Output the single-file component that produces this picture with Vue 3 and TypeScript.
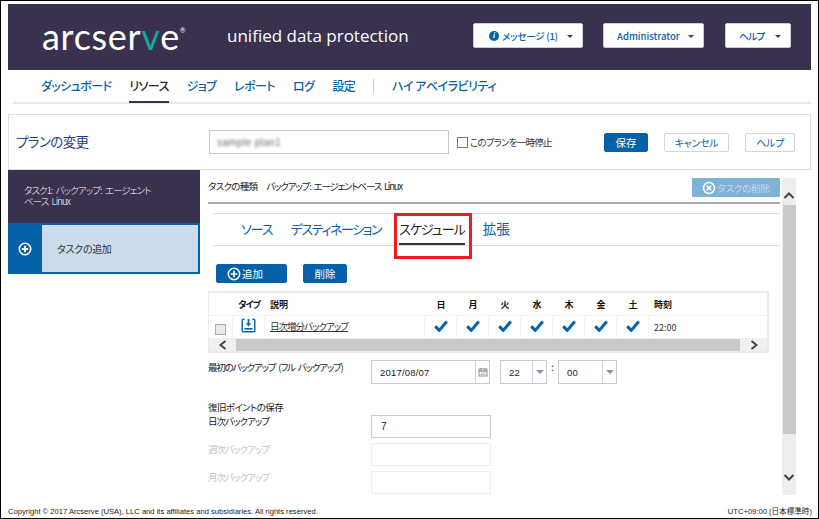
<script setup lang="ts">
const navItems = ['ダッシュボード', 'リソース', 'ジョブ', 'レポート', 'ログ', '設定']
const days = ['日', '月', '火', '水', '木', '金', '土']
</script>

<template>
  <div class="frame">
    <header class="brand">
      <div class="logo">arcser<span class="v">v</span>e<sup>®</sup></div>
      <div class="product">unified data protection</div>
      <div class="menus">
        <button class="menu m1"><span class="info">i</span>メッセージ (1)<span class="caret"></span></button>
        <button class="menu m2">Administrator<span class="caret"></span></button>
        <button class="menu m3">ヘルプ<span class="caret"></span></button>
      </div>
    </header>

    <nav class="nav">
      <a v-for="(n, i) in navItems" :key="n" :class="{ on: i === 1 }">{{ n }}</a>
      <span class="sep"></span>
      <a class="ha">ハイ アベイラビリティ</a>
    </nav>

    <section class="plan">
      <h1>プランの変更</h1>
      <div class="plan-input"><span class="blur">sample plan1</span></div>
      <label class="pause"><span class="cb"></span>このプランを一時停止</label>
      <button class="btn save">保存</button>
      <button class="btn ghost cancel">キャンセル</button>
      <button class="btn ghost help">ヘルプ</button>
    </section>

    <div class="work">
      <aside class="side">
        <div class="task">タスク1: バックアップ: エージェント<br />ベース Linux</div>
        <div class="add">
          <div class="add-icon">
            <svg width="14" height="14" viewBox="0 0 14 14"><circle cx="7" cy="7" r="5.7" fill="none" stroke="#fff" stroke-width="1.6" /><path d="M7 3.8v6.4M3.8 7h6.4" stroke="#fff" stroke-width="1.8" /></svg>
          </div>
          <div class="add-label">タスクの追加</div>
        </div>
      </aside>

      <div class="pane">
        <div class="pane-body">
          <div class="kind">
            <span class="kind-text"><span>タスクの種類</span><span class="kind-val">バックアップ: エージェントベース Linux</span></span>
            <button class="del">
              <svg width="14" height="14" viewBox="0 0 14 14"><circle cx="7" cy="7" r="5.5" fill="none" stroke="#fff" stroke-width="1.5" /><path d="M4.8 4.8l4.4 4.4M9.2 4.8l-4.4 4.4" stroke="#fff" stroke-width="1.7" /></svg>
              タスクの削除
            </button>
          </div>

          <div class="tabs">
            <a class="t1">ソース</a>
            <a class="t2">デスティネーション</a>
            <a class="t3 active">スケジュール</a>
            <a class="t4">拡張</a>
          </div>

          <div class="actions">
            <button class="btn add-btn">
              <svg width="14" height="14" viewBox="0 0 14 14"><circle cx="7" cy="7" r="5.7" fill="none" stroke="#fff" stroke-width="1.5" /><path d="M7 3.8v6.4M3.8 7h6.4" stroke="#fff" stroke-width="1.7" /></svg>
              追加
            </button>
            <button class="btn del-btn">削除</button>
          </div>

          <div class="table">
            <div class="row head">
              <div class="c c-cb"></div>
              <div class="c c-type">タイプ</div>
              <div class="c c-desc">説明</div>
              <div v-for="d in days" :key="d" class="c c-day">{{ d }}</div>
              <div class="c c-time">時刻</div>
            </div>
            <div class="row body">
              <div class="c c-cb"><span class="cb grey"></span></div>
              <div class="c c-type">
                <svg width="15" height="15" viewBox="0 0 15 15" fill="none">
                  <path d="M3.5 1.2H2.6a1.4 1.4 0 0 0-1.4 1.4v9.8a1.4 1.4 0 0 0 1.4 1.4h9.8a1.4 1.4 0 0 0 1.4-1.4V2.6a1.4 1.4 0 0 0-1.4-1.4h-.9" stroke="#0662a8" stroke-width="1.4" />
                  <path d="M7.5 1v5.2" stroke="#0662a8" stroke-width="1.8" />
                  <path d="M4.8 5.2h5.4L7.5 8.4z" fill="#0662a8" />
                  <path d="M3.6 10.8h7.8" stroke="#0662a8" stroke-width="1.6" />
                </svg>
              </div>
              <div class="c c-desc"><a>日次増分バックアップ</a></div>
              <div v-for="d in days" :key="d" class="c c-day">
                <svg width="14" height="12" viewBox="0 0 14 12"><path d="M1.2 6.2l4 4.2L12.8 1.6" fill="none" stroke="#0662a8" stroke-width="3" /></svg>
              </div>
              <div class="c c-time">22:00</div>
            </div>
            <div class="hscroll">
              <span class="h-btn"><svg width="12" height="10" viewBox="0 0 12 10"><path d="M8.5 1L3.5 5l5 4" fill="none" stroke="#444" stroke-width="2" /></svg></span>
              <span class="h-thumb"></span>
              <span class="h-btn r"><svg width="12" height="10" viewBox="0 0 12 10"><path d="M3.5 1l5 4-5 4" fill="none" stroke="#444" stroke-width="2" /></svg></span>
            </div>
          </div>

          <div class="first">
            <div class="flabel">最初のバックアップ (フル バックアップ)</div>
            <div class="field date">
              <span class="val">2017/08/07</span>
              <span class="suffix">
                <svg width="10" height="10" viewBox="0 0 10 10"><rect x="1" y="2" width="8" height="7" fill="none" stroke="#8a939c" /><path d="M1 4h8" stroke="#8a939c" stroke-width="1.4" /><path d="M3 1v2M7 1v2" stroke="#8a939c" /><path d="M2.5 6h5M2.5 7.5h5" stroke="#b9c0c6" /></svg>
              </span>
            </div>
            <div class="field hour"><span class="val">22</span><span class="suffix"><i class="tri"></i></span></div>
            <span class="colon">:</span>
            <div class="field minute"><span class="val">00</span><span class="suffix"><i class="tri"></i></span></div>
          </div>

          <div class="retain">復旧ポイントの保存</div>
          <div class="rrow r-day"><span>日次バックアップ</span><div class="num">7</div></div>
          <div class="rrow off"><span>週次バックアップ</span><div class="num"></div></div>
          <div class="rrow off"><span>月次バックアップ</span><div class="num"></div></div>
        </div>

        <div class="vscroll">
          <span class="v-btn"><svg width="12" height="9" viewBox="0 0 12 9"><path d="M1.5 7L6 2.5 10.5 7" fill="none" stroke="#444" stroke-width="2" /></svg></span>
          <span class="v-thumb"></span>
          <span class="v-rest"><svg width="12" height="9" viewBox="0 0 12 9"><path d="M1.5 2L6 6.5 10.5 2" fill="none" stroke="#444" stroke-width="2" /></svg></span>
        </div>
      </div>
    </div>

    <footer class="foot">
      <span>Copyright © 2017 Arcserve (USA), LLC and its affiliates and subsidiaries. All rights reserved.</span>
      <span>UTC+09:00 (日本標準時)</span>
    </footer>
  </div>
</template>

<style>
html, body { margin: 0; background: #fff; }
</style>

<style scoped>
* { box-sizing: border-box; }
.frame {
  width: 819px; height: 519px; border: 1px solid #000;
  padding: 3px 7px 0; display: flex; flex-direction: column; overflow: hidden;
  font-family: "Noto Sans CJK JP", "Noto Sans", sans-serif; font-feature-settings: "palt";
  font-size: 10px; color: #222; background: #fff;
}
button { font-family: inherit; font-feature-settings: inherit; cursor: default; }

.brand { height: 66px; background: #3a314f; display: flex; align-items: center; flex: none; width: 803px; }
.logo { margin-left: 34px; width: 152px; margin-top: -3px; color: #fff; font: 400 36px/1 "Lato", sans-serif; letter-spacing: 0.7px; white-space: nowrap; }
.logo .v { color: #12a99a; }
.logo sup { font-size: 7px; vertical-align: 17px; line-height: 0; letter-spacing: 0; }
.product { margin-left: 33px; margin-top: -3px; color: #fff; font: 400 17px/1 "Open Sans", sans-serif; white-space: nowrap; }
.menus { margin-left: auto; display: flex; margin-right: 20px; margin-top: -3px; }
.menu {
  height: 25px; background: #fff; border: 1px solid #c9cdd3; border-radius: 2px; color: #0662a8;
  font-size: 9.5px; font-weight: 500; display: flex; align-items: center; justify-content: flex-start; padding: 0; position: relative;
}
.m1 { width: 110px; padding-left: 15px; margin-right: 20px; letter-spacing: -0.2px; }
.m2 { width: 101px; padding-left: 13px; margin-right: 21px; }
.m3 { width: 66px; padding-left: 13px; letter-spacing: -0.5px; }
.info { width: 10px; height: 10px; border-radius: 50%; background: #0662a8; color: #fff; font: italic 700 8px/10px "Liberation Serif", serif; text-align: center; margin-right: 3px; }
.caret { position: absolute; right: 9px; top: 11px; border: 3px solid transparent; border-top-color: #33475b; border-bottom: 0; }

.nav { height: 34px; flex: none; margin-left: 5px; width: 798px; border-bottom: 2px solid #e6eaee; display: flex; align-items: flex-start; padding-left: 28px; font-size: 12px; letter-spacing: -0.6px; color: #0662a8; font-weight: 500; }
.nav a { height: 32px; line-height: 32px; margin-right: 18px; white-space: nowrap; }
.nav a.on { color: #222; border-bottom: 2px solid #3a314f; height: 33px; }
.nav a.ha { letter-spacing: -0.45px; }
.sep { width: 1px; height: 14px; background: #c8ccd0; margin: 9px 18px 0 0; }

.plan { margin-top: 10px; height: 56px; width: 803px; flex: none; border: 1px solid #d7dfe7; display: flex; align-items: center; }
.plan h1 { margin: 0 0 0 7px; width: 193px; font-size: 13.5px; letter-spacing: -0.6px; font-weight: 400; color: #2a3a8c; line-height: 1; white-space: nowrap; }
.plan-input { width: 240px; height: 24px; border: 1px solid #c4c8cc; display: flex; align-items: center; padding-left: 7px; }
.blur { color: #666; font: 10px "Liberation Sans", sans-serif; filter: blur(1.4px); letter-spacing: 0.4px; }
.pause { margin-left: 8px; width: 147px; display: flex; align-items: center; font-size: 9.5px; letter-spacing: -0.8px; color: #333; white-space: nowrap; }
.cb { display: inline-block; width: 11px; height: 11px; border: 1px solid #777; background: #fff; margin-right: 2px; flex: none; }
.cb.grey { border-color: #aaa; background: #e9e9e9; margin: 5px 0 0; }
.btn { height: 19px; border: 1px solid #0662a8; background: #0662a8; color: #fff; font-size: 10.5px; padding: 0; border-radius: 2px; display: inline-flex; align-items: center; justify-content: center; flex: none; font-weight: 400; }
.ghost { background: #fff; border-color: #cfd6dc; color: #0662a8; font-size: 10px; letter-spacing: -0.3px; }
.save { width: 44px; }
.cancel { width: 65px; margin-left: 16px; }
.help { width: 50px; margin-left: 16px; }

.work { display: flex; flex: none; }
.side { width: 192px; flex: none; }
.task { height: 53px; background: #3a314f; color: #fff; padding: 15px 0 0 16px; font-size: 9.5px; letter-spacing: -0.9px; word-spacing: 2px; line-height: 11px; font-weight: 300; white-space: nowrap; }
.add { height: 51px; background: #0662a8; display: flex; padding: 2px 2px 2px 0; }
.add-icon { width: 34px; display: flex; align-items: center; justify-content: center; }
.add-label { flex: 1; background: #ccdcec; color: #333; font-size: 10px; letter-spacing: -0.3px; line-height: 47px; padding-left: 15px; }

.pane { margin-left: 8px; width: 588px; display: flex; flex: none; }
.pane-body { width: 572px; flex: none; }
.kind { height: 34px; border-bottom: 2px solid #a8a8a8; display: flex; align-items: flex-start; justify-content: space-between; padding-top: 8px; }
.kind-text { display: flex; gap: 9px; margin-top: 3px; font-size: 9.5px; letter-spacing: -0.7px; color: #222; line-height: 11px; white-space: nowrap; }
.kind-val { letter-spacing: -1.2px; word-spacing: 2px; }
.del { width: 88px; height: 19px; background: #80b2d4; border: 0; color: #c5dcec; font-size: 9.5px; letter-spacing: -0.2px; display: flex; align-items: center; justify-content: center; padding: 0; gap: 1px; border-radius: 1px; }
.tabs { margin: 9px 0 0 5px; height: 33px; border-top: 1px solid #d5dde5; border-bottom: 1px solid #d5dde5; display: flex; font-size: 13px; color: #0662a8; font-weight: 400; }
.tabs a { display: block; line-height: 29px; height: 31px; white-space: nowrap; position: relative; }
.t1 { margin-left: 28px; letter-spacing: -1px; }
.t2 { margin-left: 18px; letter-spacing: -1.4px; }
.t3 { margin-left: 18px; color: #222; letter-spacing: -1px; }
.t3::before { content: ""; position: absolute; left: 0; right: 0; bottom: 0; height: 2px; background: #3a314f; }
.t3::after { content: ""; position: absolute; left: -5px; right: -7px; top: -1px; height: 40px; border: 3px solid #ed1c24; }
.tabs .t4 { margin-left: 18px; font-size: 13.5px; }

.actions { display: flex; margin: 18px 0 0 8px; gap: 16px; }
.add-btn { width: 71px; gap: 1px; padding-right: 13px; }
.del-btn { width: 44px; }

.table { margin-top: 8px; width: 561px; height: 62px; border: 1px solid #e6ecf1; border-width: 2px 2px 2px 1px; display: flex; flex-direction: column; }
.row { display: flex; }
.head { height: 22px; font-size: 9px; font-weight: 700; color: #111; }
.head .c-type { letter-spacing: -1px; }
.body { height: 24px; border-top: 1px solid #f1f3f5; border-bottom: 1px solid #eceff2; }
.c { display: flex; align-items: center; justify-content: center; flex: none; }
.c-cb { width: 24px; }
.c-type { width: 32px; white-space: nowrap; }
.c-desc { width: 160px; justify-content: flex-start; padding-left: 5px; }
.c-day { width: 32px; }
.c-time { width: 120px; justify-content: flex-start; padding-left: 5px; }
.body .c { border-right: 1px solid #f0f2f4; }
.body .c:last-child { border-right: 0; font-size: 9px; font-weight: 400; color: #333; }
.body .c-type { padding-bottom: 3px; }
.body .c-day { padding-bottom: 2px; }
.c-desc a { text-decoration: underline; font-size: 9.5px; letter-spacing: -1px; color: #333; padding-bottom: 2px; }
.hscroll { flex: 1; display: flex; background: #f0f0f0; }
.h-btn { width: 27px; display: flex; align-items: center; justify-content: center; flex: none; }
.h-thumb { flex: 1; background: #c9c9c9; }

.first { display: flex; align-items: flex-start; margin-top: 7px; height: 24px; }
.flabel { width: 163px; font-size: 9.5px; letter-spacing: -1.2px; word-spacing: 2px; line-height: 12px; margin-top: 1px; white-space: nowrap; }
.field { height: 24px; border: 1px solid #c8ccd0; display: flex; flex: none; font-size: 9.5px; }
.val { flex: 1; padding-left: 8px; line-height: 23px; color: #222; letter-spacing: 0.2px; font-family: "Liberation Sans", sans-serif; }
.suffix { width: 14px; border-left: 1px solid #c8d4de; display: flex; align-items: center; justify-content: center; flex: none; }
.date { width: 119px; }
.hour { width: 47px; margin-left: 10px; }
.minute { width: 59px; }
.colon { width: 11px; text-align: center; line-height: 14px; }
.tri { border: 4px solid transparent; border-top: 4px solid #8a939c; border-bottom: 0; }

.retain { margin-top: 17px; line-height: 12px; font-size: 9.5px; letter-spacing: -0.6px; color: #222; }
.rrow { display: flex; height: 23px; color: #222; }
.rrow span { width: 163px; line-height: 12px; font-size: 9.5px; letter-spacing: -1px; white-space: nowrap; }
.r-day { margin-top: 2px; }
.num { width: 120px; height: 23px; border: 1px solid #c8ccd0; font: 10px/22px "Liberation Sans", sans-serif; padding-left: 9px; }
.off { margin-top: 5px; color: #c4c4c4; }
.off .num { border-color: #eeeeee; }

.vscroll { width: 14px; margin: 8px 0 0 2px; flex: none; height: 317px; background: #eee; display: flex; flex-direction: column; }
.v-btn { height: 27px; display: flex; align-items: center; justify-content: center; padding-top: 7px; }
.v-thumb { height: 229px; background: #c9c9c9; margin-left: 1px; }
.v-rest { flex: 1; display: flex; align-items: flex-end; justify-content: center; padding-bottom: 13px; }

.foot { margin-top: auto; height: 13px; width: 804px; display: flex; justify-content: space-between; align-items: center; font-size: 7.6px; color: #222; line-height: 1; font-family: "Liberation Sans", "Noto Sans CJK JP", sans-serif; }
</style>
